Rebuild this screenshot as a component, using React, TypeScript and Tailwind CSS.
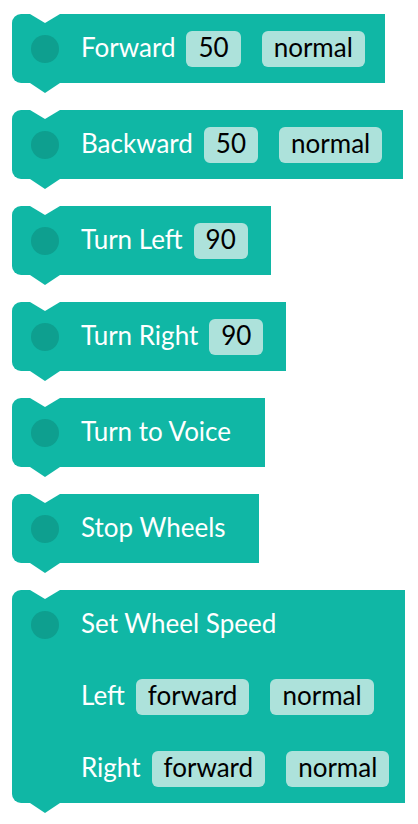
const font = { fontFamily: "Lato, 'Noto Sans', sans-serif" };

type Row = { label: string; pills?: string[] };

function Pill({ text, first }: { text: string; first: boolean }) {
  return (
    <span
      className={`${first ? "ml-[11px]" : "ml-[21px]"} flex h-[36px] items-center rounded-[6px] bg-[#ade2db] px-[12px] pb-[3px] text-[26px] leading-none text-black`}
    >
      {text}
    </span>
  );
}

function Block({ width, rows }: { width: string; rows: Row[] }) {
  return (
    <div className={`relative flex ${width} flex-col gap-[35px] rounded-l-[9px] bg-[#10b7a5] py-[16px]`}>
      {/* notch cut into the top */}
      <svg className="absolute left-[18px] top-0" width="30" height="9" viewBox="0 0 30 9">
        <polygon points="0,0 15,9 30,0" fill="#ffffff" />
      </svg>
      {/* tab under the block */}
      <svg className="absolute left-[18px] top-full" width="30" height="10" viewBox="0 0 30 10">
        <polygon points="0,0 15,10 30,0" fill="#10b7a5" />
      </svg>
      {rows.map((row, i) => (
        <div key={i} className={`flex h-[37px] items-center ${i === 0 ? "pl-[19px]" : "pl-[69px]"}`}>
          {i === 0 && <span className="mr-[22px] h-[28px] w-[28px] rounded-full bg-[#0e9f8f]" />}
          <span className="pb-[4px] text-[26px] leading-none text-white">{row.label}</span>
          {row.pills?.map((p, j) => (
            <Pill key={j} text={p} first={j === 0} />
          ))}
        </div>
      ))}
    </div>
  );
}

export default function App() {
  return (
    <div className="flex min-h-screen flex-col gap-[27px] bg-white pl-[12px] pt-[14px]" style={font}>
      <Block width="w-[373px]" rows={[{ label: "Forward", pills: ["50", "normal"] }]} />
      <Block width="w-[391px]" rows={[{ label: "Backward", pills: ["50", "normal"] }]} />
      <Block width="w-[259px]" rows={[{ label: "Turn Left", pills: ["90"] }]} />
      <Block width="w-[274px]" rows={[{ label: "Turn Right", pills: ["90"] }]} />
      <Block width="w-[253px]" rows={[{ label: "Turn to Voice" }]} />
      <Block width="w-[247px]" rows={[{ label: "Stop Wheels" }]} />
      <Block
        width="w-[393px]"
        rows={[
          { label: "Set Wheel Speed" },
          { label: "Left", pills: ["forward", "normal"] },
          { label: "Right", pills: ["forward", "normal"] },
        ]}
      />
    </div>
  );
}
